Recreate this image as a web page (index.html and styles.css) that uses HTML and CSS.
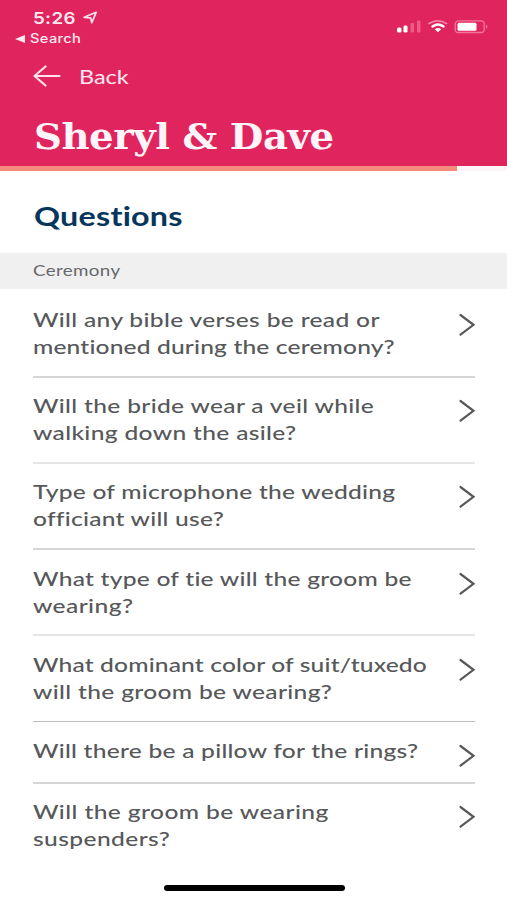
FILE: index.html
```
<!DOCTYPE html>
<html lang="en">
<head>
<meta charset="utf-8">
<meta name="viewport" content="width=device-width, initial-scale=1">
<title>Sheryl &amp; Dave</title>
<link rel="stylesheet" href="styles.css">
</head>
<body>
<svg class="defs" width="0" height="0" aria-hidden="true"><symbol id="chev" viewBox="0 0 18 24"><path d="M2.500 2L15.500 11.800L2.500 21.600" fill="none" stroke="#56585a" stroke-width="2.200" stroke-linecap="round" stroke-linejoin="miter"/></symbol></svg>
<header class="hero">
  <div class="status">
    <div class="status-left">
      <div class="clock"><span class="t time">5:26</span>
        <svg width="15" height="14" viewBox="0 0 15 14"><path d="M1.200 6.300L13.200 1.300L8.800 11.700L7.600 6.800Z" fill="none" stroke="#ffe3ed" stroke-width="1.700" stroke-linejoin="round"/></svg>
      </div>
      <div class="return"><svg width="10" height="8" viewBox="0 0 10 8"><path d="M0 4L10 0V8Z" fill="#ffe9f0"/></svg><span class="t search">Search</span></div>
    </div>
    <svg class="signals" width="92" height="16" viewBox="0 0 92 16">
      <g fill="#fff"><rect x="0" y="8.500" width="4.500" height="5" rx="1.500"/><rect x="6.500" y="6.500" width="4" height="7" rx="1.300"/></g>
      <g fill="#ee5a86"><rect x="13.500" y="4" width="3.500" height="9.500" rx="1"/><rect x="20" y="1.500" width="3.500" height="12" rx="1"/></g>
      <g fill="none" stroke-linecap="round"><path d="M32 4.500Q41 -1 49.500 4.500" stroke="#f58bad" stroke-width="1.600"/><path d="M35.500 7.500Q41 3.500 46.500 7.500" stroke="#fff" stroke-width="2.400"/></g>
      <path d="M37.800 10.300Q41 7.800 44.200 10.300L41 13.300Z" fill="#fff"/>
      <rect x="58.200" y="1.900" width="29" height="11.600" rx="3.300" fill="none" stroke="#f4759c" stroke-width="1.300"/>
      <rect x="60.500" y="3.700" width="19" height="8" rx="1.500" fill="#fff"/>
      <path d="M89 5.400Q92 7.600 89 9.900Z" fill="#f4759c"/>
    </svg>
  </div>
  <div class="back"><svg width="28" height="22" viewBox="0 0 28 22"><path d="M12.500 1.500L1.500 11L12.500 20.500M2.200 11H26.500" fill="none" stroke="#ffe3ec" stroke-width="2.200" stroke-linecap="round" stroke-linejoin="round"/></svg><span class="t back-label">Back</span></div>
  <h1 class="title"><span class="t">Sheryl &amp; Dave</span></h1>
</header>
<div class="progress"><div class="progress-fill"></div></div>
<h2 class="heading"><span class="t">Questions</span></h2>
<div class="section"><span class="t">Ceremony</span></div>
<ul class="list">
  <li class="row"><p><span class="t loose">Will any bible verses be read or</span><span class="t tight">mentioned during the ceremony?</span></p><svg class="chev"><use href="#chev"/></svg></li>
  <li class="row pale"><p><span class="t loose">Will the bride wear a veil while</span><span class="t loose">walking down the asile?</span></p><svg class="chev"><use href="#chev"/></svg></li>
  <li class="row"><p><span class="t">Type of microphone the wedding</span><span class="t">officiant will use?</span></p><svg class="chev"><use href="#chev"/></svg></li>
  <li class="row pale low"><p><span class="t">What type of tie will the groom be</span><span class="t wide">wearing?</span></p><svg class="chev"><use href="#chev"/></svg></li>
  <li class="row thin low"><p><span class="t tight">What dominant color of suit/tuxedo</span><span class="t loose">will the groom be wearing?</span></p><svg class="chev"><use href="#chev"/></svg></li>
  <li class="row single low"><p><span class="t">Will there be a pillow for the rings?</span></p><svg class="chev"><use href="#chev"/></svg></li>
  <li class="row last"><p><span class="t wide">Will the groom be wearing</span><span class="t wide">suspenders?</span></p><svg class="chev"><use href="#chev"/></svg></li>
</ul>
<div class="home"></div>
</body>
</html>
```
FILE: styles.css
```
* { box-sizing: border-box; }
body { margin: 0; height: 900px; overflow: hidden; display: flex; flex-direction: column; background: #fff; color: #56585a; font-family: Lato, "Noto Sans", sans-serif; font-variant-ligatures: none; }
svg { display: block; flex: none; }
.defs { height: 0; }
h1, h2, p, ul { margin: 0; padding: 0; }
.t { display: block; width: max-content; white-space: nowrap; transform: scaleX(1.17); transform-origin: left; }
.hero { height: 166px; flex: none; background: #e0245e; color: #ffe9f0; }
.status { height: 48px; padding: 8px 18px 0 15px; display: flex; justify-content: space-between; }
.clock { display: flex; align-items: center; height: 20px; padding-left: 18px; gap: 13px; }
.time { font: 600 16px/20px Inter, sans-serif; letter-spacing: 0.3px; }
.return { display: flex; align-items: center; gap: 5px; height: 20px; padding-top: 1px; }
.search { font: 500 12.500px/20px Inter, sans-serif; letter-spacing: 0.3px; }
.signals { margin-top: 11px; }
.back { height: 56px; padding-left: 33px; display: flex; align-items: center; gap: 18px; }
.back-label { font-size: 20px; line-height: 24px; }
.title { padding-left: 34px; margin-top: 11px; font: 700 34.500px/45px "DejaVu Serif", serif; color: #fff4f8; }
.title .t { transform: scaleX(1.12); letter-spacing: -0.400px; }
.progress { height: 5px; flex: none; background: #fef5f8; }
.progress-fill { width: 457px; height: 5px; background: #f58b7c; }
.heading { height: 82px; padding: 28px 34px 0; font-size: 27px; line-height: 34px; color: #07365c; letter-spacing: 0.2px; }
.heading .t { transform: scaleX(1.195); }
.section { height: 36px; flex: none; padding: 0 33px; background: #f0f0f1; font-size: 15.500px; line-height: 35px; letter-spacing: 0.300px; color: #66686a; }
.section .t { transform: scaleX(1.21); }
.list { list-style: none; padding: 3px 32px 0 33px; flex: none; }
.row { height: 86px; display: flex; justify-content: space-between; border-bottom: 2px solid #d4d6d7; padding-top: 14px; }
.row p { font-size: 19.500px; line-height: 27px; font-weight: 500; letter-spacing: 0.190px; }
.row .t { transform: scaleX(1.26); }
.row .tight { letter-spacing: 0.120px; }
.row .loose { letter-spacing: 0.260px; }
.row .wide { letter-spacing: 0.320px; }
.row.pale { border-color: #e5e6e7; }
.row.low { padding-top: 15px; }
.row.thin { border-bottom: 1px solid #b9bbbc; }
.row.single { height: 62px; }
.row.last { border: 0; }
.chev { width: 18px; height: 24px; margin: 7px -1px 0 0; }
.home { width: 181px; height: 6px; border-radius: 3px; background: #000; margin: 15px 0 0 164px; flex: none; }
```
